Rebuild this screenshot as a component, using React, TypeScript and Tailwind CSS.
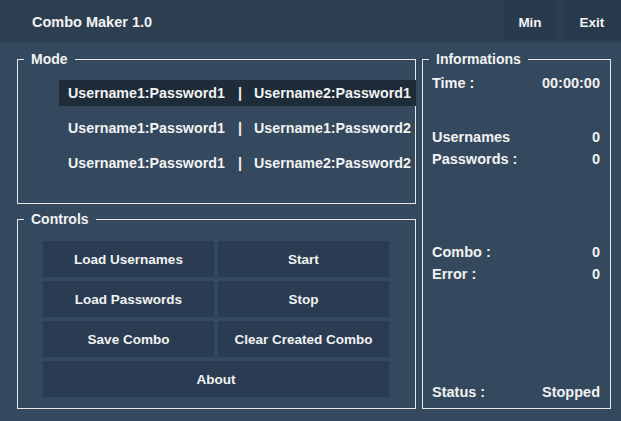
import React from "react";

const font = { fontFamily: '"Liberation Sans", Arial, sans-serif' };

function Group({
  title,
  className,
  children,
}: {
  title: string;
  className: string;
  children: React.ReactNode;
}) {
  return (
    <fieldset className={`border border-[#e6e6e6] m-0 p-0 min-w-0 ${className}`}>
      <legend className="ml-[6px] px-[7px] text-[14px] leading-[16px] font-bold text-[#f2f2f2]">
        {title}
      </legend>
      {children}
    </fieldset>
  );
}

const modes = [
  ["Username1:Password1", "Username2:Password1"],
  ["Username1:Password1", "Username1:Password2"],
  ["Username1:Password1", "Username2:Password2"],
];

function InfoRow({ label, value, className = "" }: { label: string; value: string; className?: string }) {
  return (
    <div className={`flex justify-between items-center h-[22px] pl-[9px] pr-[10px] text-[14.5px] font-bold text-[#f2f2f2] ${className}`}>
      <span>{label}</span>
      <span>{value}</span>
    </div>
  );
}

function Btn({ label, className = "" }: { label: string; className?: string }) {
  return (
    <button className={`h-[36px] pt-[2px] bg-[#293c51] text-[13.5px] font-bold text-[#f2f2f2] ${className}`}>
      {label}
    </button>
  );
}

export default function App() {
  return (
    <div className="w-[621px] h-[421px] bg-[#34495e] flex flex-col overflow-hidden select-none" style={font}>
      <div className="h-[43px] bg-[#2c3e50] flex items-start shrink-0">
        <div className="pl-[32px] pt-[13px] text-[14.5px] leading-[18px] font-bold text-[#f2f2f2]">
          Combo Maker 1.0
        </div>
        <div className="ml-auto flex gap-[6px]">
          <button className="w-[54px] h-[40px] pt-[7px] bg-[#293a4c] text-[13.5px] font-bold text-[#f2f2f2]">Min</button>
          <button className="w-[58px] h-[40px] pt-[7px] bg-[#293a4c] text-[13.5px] font-bold text-[#f2f2f2]">Exit</button>
        </div>
      </div>

      <div className="flex pl-[17px] pt-[8px] gap-[6px]">
        <div className="flex flex-col w-[399px] gap-[7px]">
          <Group title="Mode" className="h-[153px]">
            <div className="mt-[13px] ml-[41px] mr-[-1px] flex flex-col gap-[9px]">
              {modes.map((m, i) => (
                <div
                  key={i}
                  className={`h-[26px] pt-[2px] flex items-center pl-[9px] text-[14.25px] font-bold text-[#f2f2f2] whitespace-nowrap overflow-hidden ${
                    i === 0 ? "bg-[#1e2b38]" : ""
                  }`}
                >
                  <span className="w-[170px] shrink-0">{m[0]}</span>
                  <span className="w-[16px] shrink-0">|</span>
                  <span>{m[1]}</span>
                </div>
              ))}
            </div>
          </Group>
          <Group title="Controls" className="h-[198px]">
            <div className="mt-[14px] ml-[25px] grid grid-cols-[171px_171px] gap-[4px]">
              <Btn label="Load Usernames" />
              <Btn label="Start" />
              <Btn label="Load Passwords" />
              <Btn label="Stop" />
              <Btn label="Save Combo" />
              <Btn label="Clear Created Combo" />
              <Btn label="About" className="col-span-2" />
            </div>
          </Group>
        </div>
        <Group title="Informations" className="w-[189px] h-[358px]">
          <div className="flex flex-col">
            <InfoRow label="Time :" value="00:00:00" className="mt-[6px]" />
            <InfoRow label="Usernames" value="0" className="mt-[32px]" />
            <InfoRow label="Passwords :" value="0" />
            <InfoRow label="Combo :" value="0" className="mt-[71px]" />
            <InfoRow label="Error :" value="0" />
            <InfoRow label="Status :" value="Stopped" className="mt-[96px]" />
          </div>
        </Group>
      </div>
    </div>
  );
}
